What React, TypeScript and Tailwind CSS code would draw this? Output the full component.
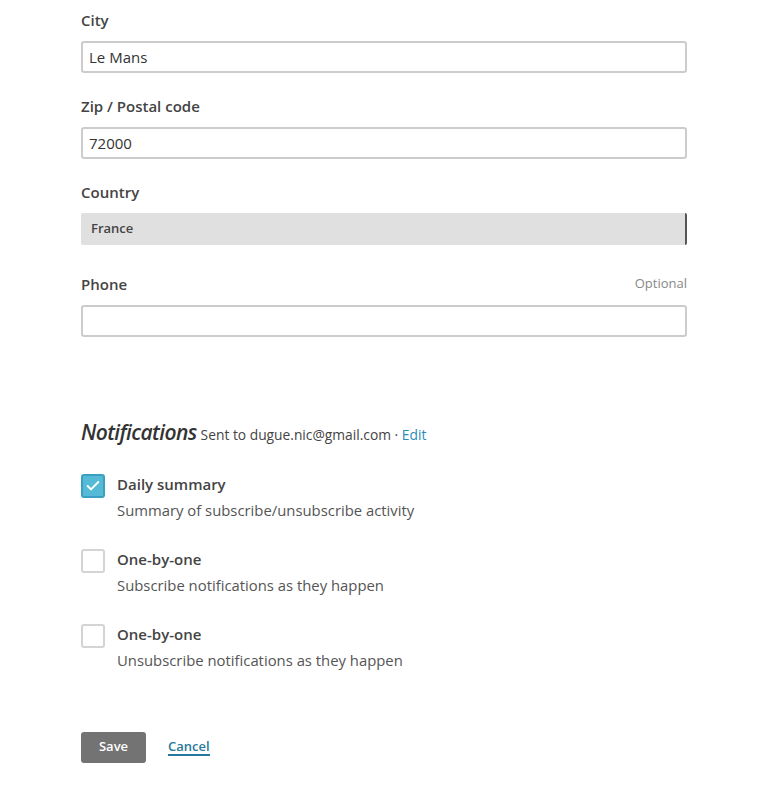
import { Check } from "lucide-react"

const font = { fontFamily: '"Open Sans", "Liberation Sans", sans-serif' }

function Field({ label, value, optional }: { label: string; value?: string; optional?: boolean }) {
  return (
    <div>
      <div className="flex h-5 items-center justify-between">
        <span className="text-[15px] font-semibold text-[#444]">{label}</span>
        {optional && <span className="text-[13px] text-[#888]">Optional</span>}
      </div>
      <div className="mt-[11px] flex h-8 items-center rounded-[3px] border-2 border-[#ccc] bg-white px-[6px] text-[15px] text-[#333]">
        {value}
      </div>
    </div>
  )
}

function Option({ title, desc, checked }: { title: string; desc: string; checked?: boolean }) {
  return (
    <div className="flex gap-3">
      <div
        className={
          checked
            ? "flex h-6 w-6 shrink-0 items-center justify-center rounded-[3px] border-2 border-[#3a9fc0] bg-[#55bad6]"
            : "h-6 w-6 shrink-0 rounded-[3px] border-2 border-[#d4d4d4] bg-white"
        }
      >
        {checked && <Check className="h-4 w-4 text-white" strokeWidth={3} />}
      </div>
      <div>
        <div className="text-[15px] font-semibold leading-5 text-[#444]">{title}</div>
        <div className="mt-[6px] text-[14.85px] leading-5 text-[#555]">{desc}</div>
      </div>
    </div>
  )
}

export default function App() {
  return (
    <div className="min-h-screen bg-white" style={font}>
      <div className="ml-[81px] w-[606px] pt-[10px] pb-12">
        <div className="space-y-[23px]">
          <Field label="City" value="Le Mans" />
          <Field label="Zip / Postal code" value="72000" />
        </div>

        <div className="mt-[23px]">
          <div className="flex h-5 items-center text-[15px] font-semibold text-[#444]">Country</div>
          <div className="mt-[11px] flex h-8 items-center rounded-[2px] border-r-2 border-[#555] bg-[#e0e0e0] px-[10px] text-[13px] font-semibold text-[#444]">
            France
          </div>
        </div>

        <div className="mt-[29px]">
          <Field label="Phone" optional />
        </div>

        <div className="mt-[80px] flex items-baseline gap-[4px]">
          <span className="text-[21px] font-semibold italic tracking-[-0.6px] text-[#333]">Notifications</span>
          <span className="text-[13.8px] text-[#444]">
            Sent to dugue.nic@gmail.com · <span className="text-[#2a8cb8]">Edit</span>
          </span>
        </div>

        <div className="mt-[25px] space-y-[29px]">
          <Option checked title="Daily summary" desc="Summary of subscribe/unsubscribe activity" />
          <Option title="One-by-one" desc="Subscribe notifications as they happen" />
          <Option title="One-by-one" desc="Unsubscribe notifications as they happen" />
        </div>

        <div className="mt-[62px] flex items-center gap-[22px]">
          <button className="h-[31px] w-[65px] rounded-[3px] bg-[#737373] text-[13px] font-semibold text-white">
            Save
          </button>
          <a className="border-b-2 border-[#26799a] text-[13px] font-semibold leading-4 text-[#26799a]">Cancel</a>
        </div>
      </div>
    </div>
  )
}
